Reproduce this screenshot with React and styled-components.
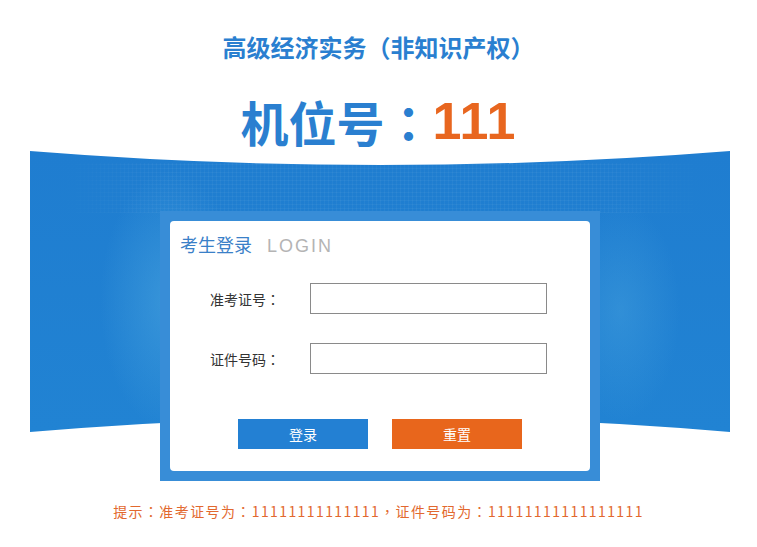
import styled, { createGlobalStyle } from "styled-components";

const GlobalStyle = createGlobalStyle`
  html, body {
    margin: 0;
    padding: 0;
    background: #fff;
  }
  body {
    font-family: "Noto Sans CJK SC", "Liberation Sans", sans-serif;
    color: #333;
  }
`;

const BANNER_PATH = "path('M0,0 Q350,28 700,0 L700,281 Q350,251 0,281 Z')";

const Page = styled.div`
  width: 757px;
  display: flex;
  flex-direction: column;
  align-items: center;
`;

// fullwidth colon centred in its cell, as the reference font draws it
const Colon = styled.span`
  font-family: "Noto Sans CJK TC", sans-serif;
`;

const SubjectTitle = styled.h2`
  margin: 32px 0 0;
  height: 30px;
  line-height: 30px;
  font-size: 24px;
  font-weight: 700;
  color: #2a7fd0;
`;

const SeatTitle = styled.h1`
  margin: 29px 0 0;
  height: 60px;
  line-height: 60px;
  font-size: 48px;
  font-weight: 700;
  color: #2a7fd0;
  display: flex;
  align-items: center;

  .num {
    color: #e8661f;
    font-family: "Liberation Sans", "Noto Sans CJK SC", sans-serif;
    font-size: 52px;
    letter-spacing: 1px;
  }
`;

const Stage = styled.div`
  position: relative;
  isolation: isolate;
  width: 700px;
  margin: 0 0 0 3px;
  padding-top: 60px;
  display: flex;
  justify-content: center;

  &::before,
  &::after {
    content: "";
    position: absolute;
    left: 0;
    top: 0;
    width: 700px;
    height: 281px;
    z-index: 0;
    clip-path: ${BANNER_PATH};
  }

  &::before {
    background:
      radial-gradient(ellipse 70px 130px at 140px 150px, rgba(80, 170, 225, 0.5), transparent),
      radial-gradient(ellipse 60px 110px at 590px 160px, rgba(80, 170, 225, 0.35), transparent),
      linear-gradient(180deg, #1f7dd0 0%, #2183d3 100%);
  }

  &::after {
    background:
      repeating-linear-gradient(90deg, rgba(255, 255, 255, 0.04) 0 1px, transparent 1px 4px),
      repeating-linear-gradient(0deg, rgba(255, 255, 255, 0.04) 0 1px, transparent 1px 4px);
    background-size: 640px 50px;
    background-position: 30px 12px;
    background-repeat: no-repeat;
    mask-image:
      linear-gradient(90deg, transparent 30px, #000 140px, #000 560px, transparent 680px);
  }
`;

const Frame = styled.div`
  position: relative;
  z-index: 1;
  width: 420px;
  padding: 10px;
  background: #388dd7;
`;

const Card = styled.div`
  background: #fff;
  border-radius: 4px;
  height: 250px;
  padding-top: 11px;
  box-sizing: border-box;
`;

const CardHeader = styled.div`
  display: flex;
  align-items: baseline;
  padding-left: 10px;
  height: 24px;
  line-height: 24px;

  .cn {
    font-size: 18px;
    color: #3a80c8;
  }
  .en {
    font-size: 18px;
    color: #b4b4b4;
    margin-left: 15px;
    letter-spacing: 2px;
    font-family: "Liberation Sans", sans-serif;
  }
`;

const Form = styled.div`
  display: flex;
  flex-direction: column;
  gap: 29px;
  margin-top: 27px;
`;

const Row = styled.label`
  display: flex;
  align-items: center;
  padding-left: 40px;
`;

const Label = styled.span`
  width: 100px;
  font-size: 14px;
  color: #333;
`;

const Input = styled.input`
  width: 237px;
  height: 31px;
  box-sizing: border-box;
  border: 1px solid #8a8a8a;
  outline: none;
  padding: 0 6px;
  font-size: 14px;
`;

const Actions = styled.div`
  display: flex;
  justify-content: center;
  gap: 24px;
  margin-top: 45px;
`;

const Button = styled.button`
  width: 130px;
  height: 30px;
  border: none;
  color: #fff;
  font-size: 14px;
  font-family: "Noto Sans CJK SC", sans-serif;
  background: ${(p) => (p.$tone === "orange" ? "#e8661c" : "#2380d3")};
  cursor: pointer;
`;

const Hint = styled.p`
  margin: 21px 0 0;
  font-size: 14px;
  line-height: 18px;
  color: #e2682e;
  letter-spacing: 1.4px;
`;

export default function App() {
  return (
    <Page>
      <GlobalStyle />
      <SubjectTitle>高级经济实务（非知识产权）</SubjectTitle>
      <SeatTitle>
        机位号<Colon>：</Colon>
        <span className="num">111</span>
      </SeatTitle>
      <Stage>
        <Frame>
          <Card>
            <CardHeader>
              <span className="cn">考生登录</span>
              <span className="en">LOGIN</span>
            </CardHeader>
            <Form>
              <Row>
                <Label>准考证号<Colon>：</Colon></Label>
                <Input type="text" />
              </Row>
              <Row>
                <Label>证件号码<Colon>：</Colon></Label>
                <Input type="text" />
              </Row>
            </Form>
            <Actions>
              <Button>登录</Button>
              <Button $tone="orange">重置</Button>
            </Actions>
          </Card>
        </Frame>
      </Stage>
      <Hint>
        提示<Colon>：</Colon>准考证号为<Colon>：</Colon>11111111111111<Colon>，</Colon>证件号码为
        <Colon>：</Colon>11111111111111111
      </Hint>
    </Page>
  );
}
